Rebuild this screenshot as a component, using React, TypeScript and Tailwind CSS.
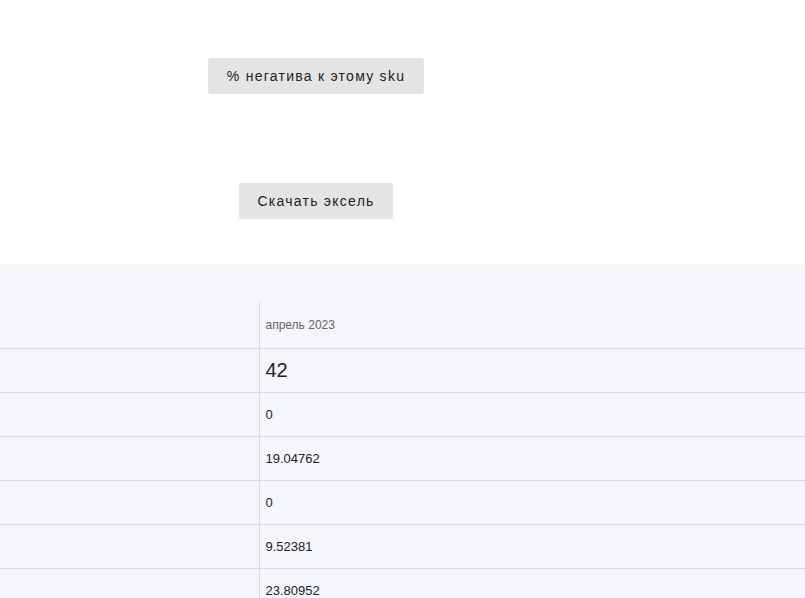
import React from 'react'

const rows = ['42', '0', '19.04762', '0', '9.52381', '23.80952']

const App = () => {
  return (
    <div className="min-h-[598px] bg-white font-['Liberation_Sans',Arial,sans-serif] text-[#222]">
      <div className="h-[264px] w-[632px] flex flex-col items-center">
        <button className="mt-[58px] h-9 px-[19px] rounded-[3px] bg-[#e4e4e4] text-[14px] tracking-[0.09em] text-[#222]">
          % негатива к этому sku
        </button>
        <button className="mt-[89px] h-9 px-[18px] rounded-[3px] bg-[#e4e4e4] text-[14px] tracking-[0.09em] text-[#222]">
          Скачать эксель
        </button>
      </div>
      <div className="bg-[#f5f6fa] pt-[37px] h-[334px] overflow-hidden">
        <table className="w-full border-collapse">
          <tbody>
            <tr className="h-[47px] border-b border-[#d9d9de]">
              <td className="w-[259px] p-0"></td>
              <td className="border-l border-[#d9d9de] px-[6px] pt-[1px] text-[12px] text-[#666]">апрель 2023</td>
            </tr>
            {rows.map((v, i) => (
              <tr key={i} className="h-[44px] border-b border-[#d9d9de]">
                <td className="w-[259px] p-0"></td>
                <td className={"border-l border-[#d9d9de] px-[6px] " + (i === 0 ? 'text-[20px] text-[#222]' : 'pt-[2px] text-[13px] text-[#222]')}>
                  {v}
                </td>
              </tr>
            ))}
          </tbody>
        </table>
      </div>
    </div>
  )
}

export default App
